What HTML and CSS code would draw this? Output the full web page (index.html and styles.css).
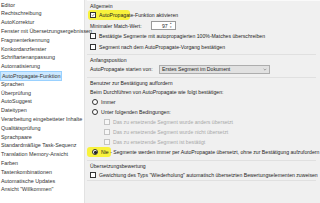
FILE: index.html
```html
<!DOCTYPE html>
<html lang="de">
<head>
<meta charset="utf-8">
<link rel="stylesheet" href="styles.css">
</head>
<body>
<div class="app">
  <ul class="nav">
    <li>Editor</li>
    <li>Rechtschreibung</li>
    <li>AutoKorrektur</li>
    <li>Fenster mit Übersetzungsergebnissen</li>
    <li>Fragmenterkennung</li>
    <li>Konkordanzfenster</li>
    <li>Schriftartenanpassung</li>
    <li>Automatisierung</li>
    <li class="sel"><span>AutoPropagate-Funktion</span></li>
    <li>Sprachen</li>
    <li>Überprüfung</li>
    <li>AutoSuggest</li>
    <li>Dateitypen</li>
    <li>Verarbeitung eingebetteter Inhalte</li>
    <li>Qualitätsprüfung</li>
    <li>Sprachpaare</li>
    <li>Standardmäßige Task-Sequenz</li>
    <li>Translation Memory-Ansicht</li>
    <li>Farben</li>
    <li>Tastenkombinationen</li>
    <li>Automatische Updates</li>
    <li>Ansicht "Willkommen"</li>
  </ul>
  <div class="panel">
    <section class="sec sec1">
      <div class="row head">Allgemein</div>
      <div class="row"><span class="hl hl1"></span><span class="cb on"><svg viewBox="0 0 7 7"><path d="M1.3 3.6 L2.9 5.1 L5.8 1.8" fill="none" stroke="#222" stroke-width="0.9"/></svg></span><span class="lbl">AutoPropagate-Funktion aktivieren</span></div>
      <div class="row"><span>Minimaler Match-Wert:</span><span class="spin"><span class="val">97</span><span class="arrows"><i>&#9650;</i><i>&#9660;</i></span></span></div>
      <div class="row"><span class="cb"></span><span class="lbl">Bestätigte Segmente mit autopropagierten 100%-Matches überschreiben</span></div>
      <div class="row"><span class="cb"></span><span class="lbl">Segment nach dem AutoPropagate-Vorgang bestätigen</span></div>
    </section>
    <section class="sec sec2">
      <div class="row head">Anfangsposition</div>
      <div class="row"><span class="w70">AutoPropagate starten von:</span><span class="select"><span>Erstes Segment im Dokument</span><svg viewBox="0 0 6 4"><path d="M1 1 L3 3 L5 1" fill="none" stroke="#555" stroke-width="0.7"/></svg></span></div>
    </section>
    <section class="sec sec3">
      <div class="row head">Benutzer zur Bestätigung auffordern</div>
      <div class="row">Beim Durchführen von AutoPropagate wie folgt bestätigen:</div>
      <div class="row ind"><span class="rb"></span><span class="lbl">Immer</span></div>
      <div class="row ind"><span class="rb"></span><span class="lbl">Unter folgenden Bedingungen:</span></div>
      <div class="row ind2 dis"><span class="cb"></span><span class="lbl">Das zu ersetzende Segment wurde anders übersetzt</span></div>
      <div class="row ind2 dis"><span class="cb"></span><span class="lbl">Das zu ersetzende Segment wurde nicht übersetzt</span></div>
      <div class="row ind2 dis"><span class="cb"></span><span class="lbl">Das zu ersetzende Segment ist bestätigt</span></div>
      <div class="row ind"><span class="hl hl2"></span><span class="rb on"></span><span class="lbl">Nie - Segmente werden immer per AutoPropagate übersetzt, ohne zur Bestätigung aufzufordern</span></div>
    </section>
    <section class="sec sec4">
      <div class="row head">Übersetzungsbewertung</div>
      <div class="row"><span class="cb"></span><span class="lbl">Gewichtung des Typs "Wiederholung" automatisch übersetzten Bewertungselementen zuweisen</span></div>
    </section>
  </div>
</div>
</body>
</html>
```

FILE: styles.css
```css
html, body {
  margin: 0;
  padding: 0;
  width: 320px;
  height: 203px;
  overflow: hidden;
  background: #f0f0f0;
  font-family: "Liberation Sans", Arial, sans-serif;
  font-size: 5.4px;
  color: #1e1e1e;
}
.app {
  display: flex;
  height: 203px;
}
.nav {
  list-style: none;
  margin: 0;
  padding: 0.6px 0 0 0;
  width: 85px;
  flex: none;
  background: #fff;
  border-right: 1px solid #e2e2e2;
  box-sizing: border-box;
  color: #333;
}
.nav li {
  height: 8.8px;
  line-height: 8.8px;
  padding-left: 1px;
  white-space: nowrap;
}
.nav li.sel span {
  display: inline-block;
  margin-left: -1px;
  padding: 0 1px;
  height: 8px;
  line-height: 8px;
  background: #cce8ff;
  border: 0.5px solid #99d1ff;
}
.panel {
  margin-left: 2px;
  flex: 1;
  min-width: 0;
  border-top: 1px solid #fafafa;
  box-sizing: border-box;
  white-space: nowrap;
  font-size: 5.15px;
}
.sec {
  border-bottom: 1px solid #e0e0e0;
  padding-left: 3px;
  margin-right: 4px;
}
.sec1 { padding-bottom: 2px; }
.sec2 { padding-bottom: 3px; }
.sec3 { padding-bottom: 3px; }
.row {
  position: relative;
  display: flex;
  align-items: center;
  height: 10px;
  line-height: 10px;
}
.sec1 .row:not(.head) { height: 10.5px; }
.head { height: 9px; }
.lbl { margin-left: 3px; }
.ind { padding-left: 2px; }
.ind2 { padding-left: 14px; }
.dis { color: #a8a8a8; }
.cb {
  width: 6px;
  height: 6px;
  border: 0.6px solid #333;
  background: #fff;
  box-sizing: border-box;
  flex: none;
  display: inline-flex;
}
.cb svg { width: 100%; height: 100%; }
.dis .cb { border-color: #c4c4c4; background: #f7f7f7; }
.rb {
  width: 6px;
  height: 6px;
  border: 0.6px solid #333;
  border-radius: 50%;
  background: #fff;
  box-sizing: border-box;
  flex: none;
}
.rb.on::after {
  content: "";
  position: absolute;
  left: 1.2px;
  top: 1.2px;
  width: 2.4px;
  height: 2.4px;
  border-radius: 50%;
  background: #222;
}
.hl {
  position: absolute;
  background: #f8f23c;
  border-radius: 3px;
  filter: blur(0.6px);
}
.hl1 { left: -2px; top: 0; width: 42px; height: 10px; }
.hl2 { left: -3px; top: 0; width: 24px; height: 10px; }
.cb, .rb, .lbl { position: relative; }
.spin {
  display: flex;
  align-items: center;
  margin-left: 9px;
  width: 25px;
  height: 9px;
  background: #fff;
  border: 0.6px solid #9a9a9a;
  box-sizing: border-box;
}
.spin .val { flex: 1; text-align: right; padding-right: 2px; line-height: 8px; }
.arrows {
  display: flex;
  flex-direction: column;
  width: 5px;
  font-size: 2.5px;
  line-height: 3.5px;
  color: #555;
}
.arrows i { font-style: normal; }
.w70 { width: 69px; }
.select {
  display: flex;
  align-items: center;
  justify-content: space-between;
  width: 111px;
  height: 9px;
  padding: 0 2px;
  background: #e1e1e1;
  border: 0.6px solid #adadad;
  box-sizing: border-box;
  line-height: 8px;
}
.select svg { width: 4px; height: 3px; }
```
